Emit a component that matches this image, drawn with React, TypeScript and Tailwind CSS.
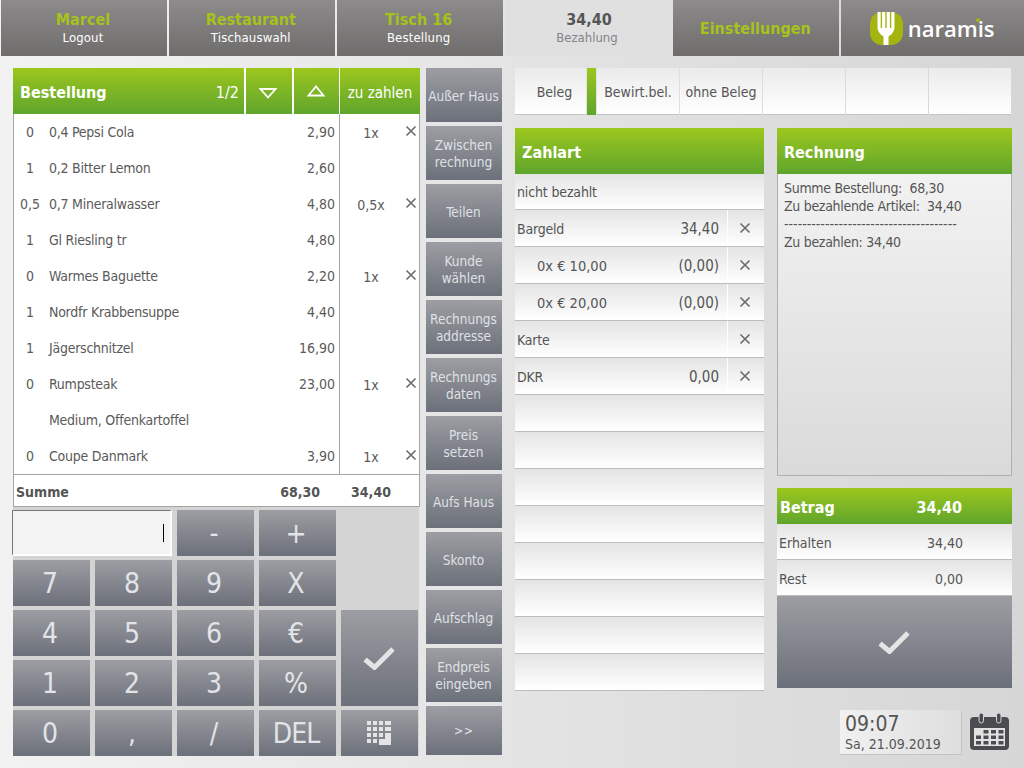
import React from 'react';

const font = "[font-family:'DejaVu_Sans',sans-serif] [font-stretch:condensed]";
const green = 'bg-gradient-to-b from-[#9cc71c] to-[#5fa52b]';
const grey = 'bg-gradient-to-b from-[#9d9ea3] to-[#6c707a]';
const light = 'bg-gradient-to-b from-[#e4e4e4] to-[#ffffff]';
const tab = 'bg-gradient-to-b from-[#ebebeb] to-[#ffffff] border-b border-[#c4c4c4]';

const orders = [
  { qty: '0', name: '0,4 Pepsi Cola', price: '2,90', pay: '1x' },
  { qty: '1', name: '0,2 Bitter Lemon', price: '2,60' },
  { qty: '0,5', name: '0,7 Mineralwasser', price: '4,80', pay: '0,5x' },
  { qty: '1', name: 'Gl Riesling tr', price: '4,80' },
  { qty: '0', name: 'Warmes Baguette', price: '2,20', pay: '1x' },
  { qty: '1', name: 'Nordfr Krabbensuppe', price: '4,40' },
  { qty: '1', name: 'Jägerschnitzel', price: '16,90' },
  { qty: '0', name: 'Rumpsteak', price: '23,00', pay: '1x' },
  { qty: '', name: 'Medium, Offenkartoffel', price: '' },
  { qty: '0', name: 'Coupe Danmark', price: '3,90', pay: '1x' },
];

const sideButtons = [
  ['Außer Haus'],
  ['Zwischen', 'rechnung'],
  ['Teilen'],
  ['Kunde', 'wählen'],
  ['Rechnungs', 'addresse'],
  ['Rechnungs', 'daten'],
  ['Preis', 'setzen'],
  ['Aufs Haus'],
  ['Skonto'],
  ['Aufschlag'],
  ['Endpreis', 'eingeben'],
];

const payRows = [
  { label: 'Bargeld', value: '34,40' },
  { label: '0x € 10,00', value: '(0,00)', indent: true },
  { label: '0x € 20,00', value: '(0,00)', indent: true },
  { label: 'Karte', value: '' },
  { label: 'DKR', value: '0,00' },
];

function Close({ size = 12, color = '#6a6a6a' }: { size?: number; color?: string }) {
  return (
    <svg width={size} height={size} viewBox="0 0 12 12" fill="none" stroke={color} strokeWidth="1.6">
      <path d="M1.5 1.5 10.5 10.5M10.5 1.5 1.5 10.5" />
    </svg>
  );
}

function Check({ w = 32 }: { w?: number }) {
  return (
    <svg width={w} height={w * 0.78} viewBox="0 0 32 25" fill="none" stroke="#e4e4e4" strokeWidth="5">
      <path d="M2 13.5 11.5 21.5 30 3" />
    </svg>
  );
}

function NavTab({ top, bottom, className = '' }: { top: string; bottom?: string; className?: string }) {
  return (
    <div className={`h-14 pr-[2px] flex flex-col items-center justify-center bg-gradient-to-b from-[#8d8b8b] to-[#6f6d6c] ${className}`}>
      <span className="text-[16px] leading-[19px] font-bold text-[#a5c31a]">{top}</span>
      {bottom && <span className="text-[13px] leading-[17px] tracking-[0.15px] text-white">{bottom}</span>}
    </div>
  );
}

function Key({ children, icon, className = '' }: { children: React.ReactNode; icon?: boolean; className?: string }) {
  return (
    <div className={`flex items-center justify-center text-[#e2e4e8] text-[28px] ${icon ? 'pr-[2px]' : 'pr-[3px] pt-[2px]'} ${grey} ${className}`}>{children}</div>
  );
}

function Logo() {
  return (
    <div className="flex items-center gap-[5px] pr-[1px]">
      <svg width="33" height="33" viewBox="0 0 33 33">
        <rect x="0" y="0" width="33" height="33" rx="12" fill="#a5b510" />
        <path
          d="M7.500 0h3.200v16h1.400V0h3.200v16h1.400V0h3.200v16h1.400V0h3.200v15c0 5-3.500 8-6 9.500V33h-5V24.500C11 23 7.500 20 7.500 15z"
          fill="#ffffff"
        />
      </svg>
      <span className="relative text-[22px] leading-none font-semibold text-white [font-stretch:normal] [font-family:'Open_Sans',sans-serif]">
        naramis
        <span className="absolute left-[68px] top-[1px] w-1 h-1 rounded-full bg-[#a5b510]" />
      </span>
    </div>
  );
}

function Calendar() {
  const cells = [
    [13.5, 17], [21, 17], [28.5, 17],
    [6, 22.5], [13.5, 22.5], [21, 22.5], [28.5, 22.5],
    [6, 28], [13.5, 28], [21, 28], [28.5, 28],
  ];
  return (
    <svg width="39" height="38" viewBox="0 0 39 38" fill="#4b4c4f">
      <rect x="0" y="4" width="39" height="33" rx="4" />
      <rect x="4" y="15" width="31" height="18" fill="#e2e2e2" />
      <rect x="9" y="0" width="4.500" height="10" rx="2.200" stroke="#d9d9d9" strokeWidth="1" />
      <rect x="26.500" y="0" width="4.500" height="10" rx="2.200" stroke="#d9d9d9" strokeWidth="1" />
      {cells.map(([x, y]) => (
        <rect key={`${x}-${y}`} x={x} y={y} width="5" height="3.500" />
      ))}
    </svg>
  );
}

function KeypadIcon() {
  const cells: React.ReactNode[] = [];
  for (let r = 0; r < 4; r++) {
    for (let c = 0; c < 4; c++) {
      const inCorner = (r === 3 && c >= 2) || (r === 2 && c === 3);
      if (!inCorner) cells.push(<rect key={`${r}-${c}`} x={c * 6} y={r * 6} width={c === 3 ? 6 : 4} height="4" />);
    }
  }
  return (
    <svg width="24" height="24" viewBox="0 0 24 24" fill="#e4e4e4">
      {cells}
      <path d="M18 12h6v12H12v-6h6z" />
    </svg>
  );
}

function OrderPanel() {
  return (
    <div className="w-[407px]">
      <div className={`h-[46px] flex text-white ${green}`}>
        <div className="w-[231px] pl-[7px] pr-[5px] pt-1 flex items-center justify-between">
          <span className="text-[16px] font-bold">Bestellung</span>
          <span className="text-[16px]">1/2</span>
        </div>
        <div className="w-[48px] border-l-2 border-white flex items-center justify-center pt-[4px] pr-[2px]">
          <svg width="18" height="11" viewBox="0 0 18 11" fill="none" stroke="#fff" strokeWidth="1.800">
            <path d="M1.500 1h15L9 9.500z" />
          </svg>
        </div>
        <div className="w-[47px] pr-[2px] border-l-2 border-white flex items-center justify-center">
          <svg width="18" height="12" viewBox="0 0 18 12" fill="none" stroke="#fff" strokeWidth="1.800">
            <path d="M1.500 10.500h15L9 1.500z" />
          </svg>
        </div>
        <div className="flex-1 pt-1 border-l border-white flex items-center justify-center text-[15px]">zu zahlen</div>
      </div>
      <div className="bg-white border-x border-b border-[#a5a5a5]">
        {orders.map((o, i) => (
          <div key={i} className="h-9 flex items-center text-[#5a5a5a]">
            <span className="w-[32px] mr-[3px] text-center">{o.qty}</span>
            <span className="flex-1 whitespace-nowrap tracking-[-0.25px]">{o.name}</span>
            <span className="w-[60px] pr-[4px] text-right">{o.price}</span>
            <div className="w-[80px] h-9 border-l border-[#a5a5a5] flex items-center relative">
              {o.pay && <span className="w-[62px] text-center pt-[2px]">{o.pay}</span>}
              {o.pay && (
                <span className="absolute right-[2px] top-[11px]">
                  <Close />
                </span>
              )}
            </div>
          </div>
        ))}
      </div>
      <div className="h-[32px] pt-[3px] bg-white border-x border-b border-[#a5a5a5] flex items-center font-bold text-[#555]">
        <span className="w-[266px] pl-[2px]">Summe</span>
        <span className="w-[40px] text-right">68,30</span>
        <span className="w-[62px] ml-[20px] text-center">34,40</span>
      </div>
    </div>
  );
}

function Numpad() {
  return (
    <div className="w-[406px] pt-[3px] bg-[#d4d4d4] grid grid-cols-[repeat(5,77px)] grid-rows-[repeat(5,46px)] gap-x-[5px] gap-y-1">
      <div className="col-span-2 -ml-[1px] border-t border-l border-[#777] border-b-2 border-r-2 border-b-white border-r-white bg-[#f3f3f3] flex items-center justify-end pr-[6px]">
        <div className="w-[1px] h-[18px] bg-black" />
      </div>
      <Key>-</Key>
      <Key>+</Key>
      <div className="row-span-2" />
      <Key>7</Key>
      <Key>8</Key>
      <Key>9</Key>
      <Key>X</Key>
      <Key>4</Key>
      <Key>5</Key>
      <Key>6</Key>
      <Key>€</Key>
      <Key icon className="row-span-2">
        <Check />
      </Key>
      <Key>1</Key>
      <Key>2</Key>
      <Key>3</Key>
      <Key>%</Key>
      <Key>0</Key>
      <Key>,</Key>
      <Key>/</Key>
      <Key className="tracking-[-1px]">DEL</Key>
      <Key icon>
        <KeypadIcon />
      </Key>
    </div>
  );
}

function PayRow({ label, value, indent }: { label: string; value: string; indent?: boolean }) {
  return (
    <div className={`h-[37px] flex items-center border-b border-[#bdbdbd] ${light}`}>
      <span className={`flex-1 whitespace-nowrap ${indent ? 'pl-[22px] pt-[3px] text-[14.500px]' : 'pl-[2px] pt-[2px] tracking-[-0.2px]'}`}>{label}</span>
      <span className={`pr-2 text-[15px] ${indent ? 'pt-[3px]' : 'pt-[2px]'}`}>{value}</span>
      <div className="w-[37px] h-full border-l border-white flex items-center justify-center pr-[2px]">
        <Close />
      </div>
    </div>
  );
}

export default function App() {
  return (
    <div className={`w-[1024px] h-[768px] overflow-hidden bg-gradient-to-r from-[#f2f2f2] to-[#d6d6d6] text-[#555] text-[14px] ${font}`}>
      <div className="flex h-14 gap-[2px] pl-[1px]">
        <NavTab top="Marcel" bottom="Logout" className="w-[166px]" />
        <NavTab top="Restaurant" bottom="Tischauswahl" className="w-[166px]" />
        <NavTab top="Tisch 16" bottom="Bestellung" className="w-[166px]" />
        <div className="w-[169px] -mr-[2px] flex flex-col items-center justify-center bg-[#e0e0e0]">
          <span className="text-[16px] leading-[19px] font-bold text-[#555]">34,40</span>
          <span className="text-[13px] leading-[17px] pr-[4px] text-[#85838a]">Bezahlung</span>
        </div>
        <NavTab top="Einstellungen" className="w-[166px]" />
        <div className="w-[183px] h-14 flex items-center justify-center bg-gradient-to-b from-[#8d8b8b] to-[#6f6d6c]">
          <Logo />
        </div>
      </div>

      <div className="flex pt-3 pl-[13px]">
        <div className="w-[407px]">
          <OrderPanel />
          <Numpad />
        </div>

        <div className="w-[76px] ml-[6px] flex flex-col gap-1">
          {sideButtons.map((lines, i) => (
            <div
              key={i}
              className={`h-[54px] pr-[1px] flex flex-col items-center justify-center text-[13.500px] leading-[17px] text-[#dfe1e5] ${lines.length === 1 ? 'pt-[3px]' : 'pt-[1px]'} ${grey}`}
            >
              {lines.map(l => (
                <span key={l}>{l}</span>
              ))}
            </div>
          ))}
          <div className={`h-[49px] flex items-center justify-center text-[12px] tracking-[1px] text-[#e2e4e8] ${grey}`}>&gt;&gt;</div>
        </div>

        <div className="w-[497px] ml-[13px]">
          <div className="h-[47px] flex gap-[1px]">
            <div className={`w-[71px] pt-[2px] pl-2 flex items-center justify-center ${tab}`}>Beleg</div>
            <div className={`w-[9px] ${green}`} />
            <div className={`w-[82px] pt-[2px] flex items-center justify-center ${tab}`}>Bewirt.bel.</div>
            <div className={`w-[82px] pt-[2px] flex items-center justify-center ${tab}`}>ohne Beleg</div>
            <div className={`w-[82px] ${tab}`} />
            <div className={`w-[82px] ${tab}`} />
            <div className={`w-[82px] ${tab}`} />
          </div>

          <div className="flex mt-[13px]">
            <div className="w-[249px]">
              <div className={`h-[46px] pt-1 flex items-center pl-[7px] text-white text-[16px] font-bold ${green}`}>Zahlart</div>
              <div className={`h-9 pt-[2px] flex items-center pl-[2px] tracking-[-0.15px] border-b border-[#bdbdbd] ${light}`}>nicht bezahlt</div>
              {payRows.map(r => (
                <PayRow key={r.label} label={r.label} value={r.value} indent={r.indent} />
              ))}
              {[0, 1, 2, 3, 4, 5, 6, 7].map(i => (
                <div key={i} className={`h-[37px] border-b border-[#bdbdbd] ${light}`} />
              ))}
            </div>

            <div className="w-[235px] ml-[13px]">
              <div className={`h-[46px] pt-1 flex items-center pl-[7px] text-white text-[16px] font-bold ${green}`}>Rechnung</div>
              <div className="h-[302px] pl-[6px] pt-[5px] leading-[18px] tracking-[-0.3px] bg-gradient-to-b from-[#f2f2f2] to-[#dadada] border-x border-b border-[#b0b0b0]">
                <div>Summe Bestellung:&nbsp; 68,30</div>
                <div>Zu bezahlende Artikel:&nbsp; 34,40</div>
                <div className="overflow-hidden whitespace-nowrap tracking-normal">--------------------------------------</div>
                <div>Zu bezahlen: 34,40</div>
              </div>

              <div className={`h-9 mt-3 pt-1 flex items-center justify-between pl-[3px] pr-[50px] text-white text-[16px] font-bold ${green}`}>
                <span>Betrag</span>
                <span>34,40</span>
              </div>
              <div className={`h-9 pt-1 flex items-center justify-between pl-[2px] pr-[49px] border-b border-[#bdbdbd] ${light}`}>
                <span>Erhalten</span>
                <span>34,40</span>
              </div>
              <div className={`h-9 pt-1 flex items-center justify-between pl-[2px] pr-[49px] border-b border-[#bdbdbd] ${light}`}>
                <span>Rest</span>
                <span>0,00</span>
              </div>
              <div className={`h-[92px] pr-[2px] flex items-center justify-center ${grey}`}>
                <Check />
              </div>

              <div className="flex mt-[22px]">
                <div className="w-[122px] h-[45px] ml-[63px] pl-[5px] flex flex-col justify-center bg-gradient-to-r from-[#f1f1f1] to-[#dedede] border-b border-r border-[#c4c4c4] text-[#555]">
                  <span className="text-[21px] leading-[23px]">09:07</span>
                  <span className="text-[14px] leading-[16px]">Sa, 21.09.2019</span>
                </div>
                <div className="ml-2 mt-[3px]">
                  <Calendar />
                </div>
              </div>
            </div>
          </div>
        </div>
      </div>
    </div>
  );
}
